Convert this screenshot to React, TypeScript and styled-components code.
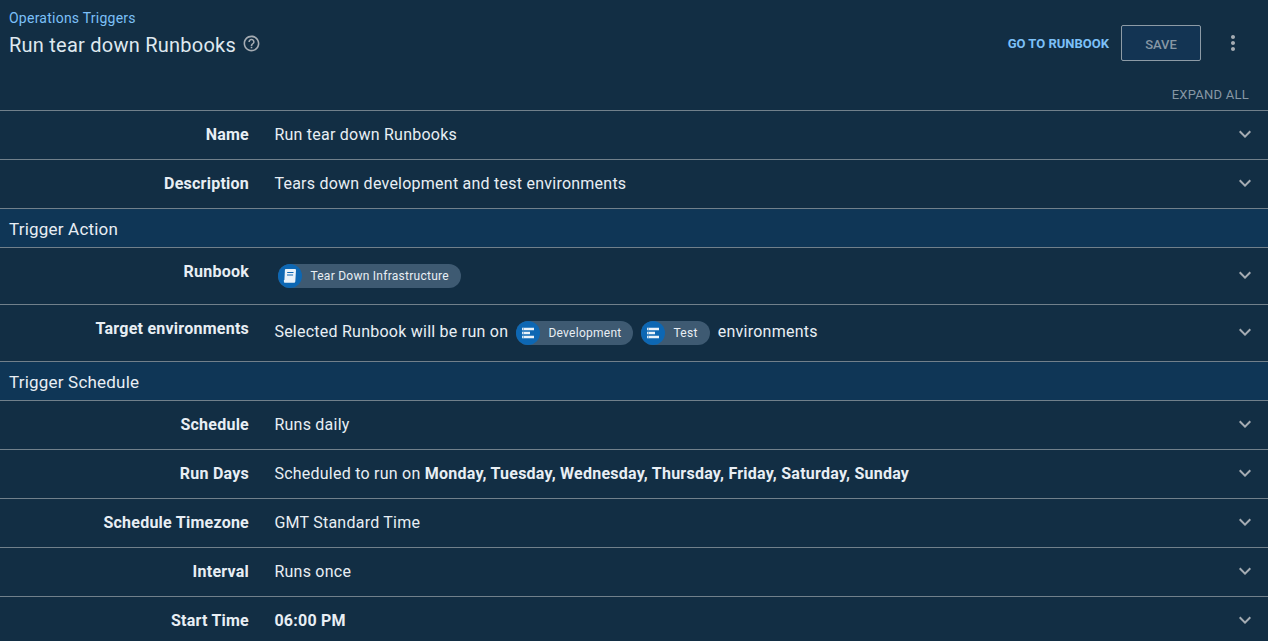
import React from "react";
import styled, { createGlobalStyle } from "styled-components";
import { MdExpandMore, MdHelpOutline, MdMoreVert } from "react-icons/md";

const GlobalStyle = createGlobalStyle`
  *, *::before, *::after { box-sizing: border-box; }
  body {
    margin: 0;
    background: #122e44;
    color: #e8eef4;
    font-family: Roboto, "Liberation Sans", sans-serif;
    font-size: 16px;
    letter-spacing: 0.24px;
    overflow: hidden;
  }
`;

const Page = styled.main`
  height: 641px;
  overflow: hidden;
  background: #122e44;
`;

const Header = styled.header`
  display: flex;
  justify-content: space-between;
  height: 78px;
  padding: 0 23px 0 9px;
`;

const Heading = styled.div`
  padding-top: 8px;
`;

const Breadcrumb = styled.a`
  display: block;
  font-size: 14px;
  line-height: 20px;
  color: #7cc0f8;
`;

const TitleLine = styled.div`
  display: flex;
  align-items: center;
  height: 32px;
`;

const Title = styled.h1`
  margin: 2px 0 0;
  font-size: 20px;
  font-weight: 400;
  line-height: 28px;
  color: #dfe8ef;
`;

const HelpIcon = styled(MdHelpOutline)`
  width: 19px;
  height: 19px;
  margin: 0 0 1px 6px;
  color: #a5acb3;
`;

const Actions = styled.div`
  display: flex;
  align-items: center;
  height: 36px;
  margin-top: 25px;
`;

const LinkButton = styled.button`
  border: 0;
  padding: 1px 0 0;
  margin-right: 12px;
  background: none;
  color: #7cc0f8;
  font: 700 13px/21px Roboto, sans-serif;
`;

const SaveButton = styled.button`
  width: 80px;
  height: 36px;
  padding: 3px 0 0;
  margin-right: 20px;
  border: 1px solid #8d9ba6;
  border-radius: 2px;
  background: #133453;
  color: #8797a4;
  font: 500 13px/21px Roboto, sans-serif;
`;

const MoreIcon = styled(MdMoreVert)`
  width: 24px;
  height: 24px;
  color: #a5acb3;
`;

const ExpandBar = styled.div`
  display: flex;
  justify-content: flex-end;
  height: 32px;
  padding: 7px 19px 0 0;
  font-size: 13px;
  line-height: 20px;
  color: #8797a4;
`;

const Section = styled.h2`
  height: 39px;
  margin: 0;
  padding: 1px 9px 0;
  border-top: 1px solid #71808b;
  background: #0f3656;
  font-size: 17px;
  font-weight: 400;
  line-height: 39px;
  letter-spacing: 0.2px;
`;

const Row = styled.section<{ $tall?: boolean }>`
  display: grid;
  grid-template-columns: 249px 1fr 24px;
  column-gap: 25.4px;
  height: ${(p) => (p.$tall ? 57 : 49)}px;
  padding-right: 11px;
  border-top: 1px solid #71808b;
`;

const Label = styled.div`
  padding-top: 12px;
  text-align: right;
  font-weight: 700;
  line-height: 24px;
`;

const Value = styled.div<{ $chips?: boolean }>`
  display: flex;
  align-items: flex-start;
  padding-top: ${(p) => (p.$chips ? 15 : 12)}px;
  white-space: pre;
  line-height: 24px;
`;

const Chevron = styled(MdExpandMore)`
  align-self: center;
  width: 24px;
  height: 24px;
  margin-bottom: 2px;
  color: #a5acb3;
`;

const ChipBox = styled.span`
  display: inline-flex;
  align-items: center;
  height: 24px;
  margin: 1px 4px 0;
  padding-right: 12px;
  border-radius: 12px;
  background: #3e5a72;
  font-size: 12px;
  line-height: 24px;
  letter-spacing: 0.26px;
`;

const ChipIcon = styled.span`
  display: grid;
  place-items: center;
  width: 24px;
  height: 24px;
  margin-right: 8px;
  border-radius: 50%;
  background: #0d67b3;
`;

const Glyph = styled.svg`
  display: block;
`;

const RunbookGlyph = () => (
  <Glyph width="24" height="24" viewBox="0 0 24 24">
    <path d="M7.8 5H17q1.100 0 1 1.100l-.7 11.400q-.1 1.200-1.200 1.200H6.900q-1.100 0-1-1.200V16h.5l.5-10q0-1 .9-1z" fill="#eaf2f9" />
    <path d="M9.200 8.500h6.300M9 11h6.100" stroke="#0d67b3" strokeWidth="1" />
  </Glyph>
);

const EnvironmentGlyph = () => (
  <Glyph width="24" height="24" viewBox="0 0 24 24">
    <path d="M6 6.800h12v2.400H6zM6 10.800h8v2.400H6zM6 14.800h12v2.400H6z" fill="#eaf2f9" />
    <path d="M6.800 8h1.200M6.800 12h1.200M6.800 16h1.200" stroke="#0d67b3" strokeWidth=".8" />
  </Glyph>
);

const Chip = ({ kind, children }: { kind: "runbook" | "environment"; children: React.ReactNode }) => (
  <ChipBox>
    <ChipIcon>{kind === "runbook" ? <RunbookGlyph /> : <EnvironmentGlyph />}</ChipIcon>
    {children}
  </ChipBox>
);

const Field = ({ label, tall, children }: { label: string; tall?: boolean; children: React.ReactNode }) => (
  <Row $tall={tall}>
    <Label>{label}</Label>
    <Value $chips={tall}>{children}</Value>
    <Chevron />
  </Row>
);

export default function App() {
  return (
    <>
      <GlobalStyle />
      <Page>
        <Header>
          <Heading>
            <Breadcrumb>Operations Triggers</Breadcrumb>
            <TitleLine>
              <Title>Run tear down Runbooks</Title>
              <HelpIcon />
            </TitleLine>
          </Heading>
          <Actions>
            <LinkButton>GO TO RUNBOOK</LinkButton>
            <SaveButton>SAVE</SaveButton>
            <MoreIcon />
          </Actions>
        </Header>
        <ExpandBar>EXPAND ALL</ExpandBar>
        <Field label="Name">Run tear down Runbooks</Field>
        <Field label="Description">Tears down development and test environments</Field>
        <Section>Trigger Action</Section>
        <Field label="Runbook" tall>
          <Chip kind="runbook">Tear Down Infrastructure</Chip>
        </Field>
        <Field label="Target environments" tall>
          <span>Selected Runbook will be run on </span>
          <Chip kind="environment">Development</Chip>
          <Chip kind="environment">Test</Chip>
          <span> environments</span>
        </Field>
        <Section>Trigger Schedule</Section>
        <Field label="Schedule">Runs daily</Field>
        <Field label="Run Days">
          <span>Scheduled to run on </span>
          <strong>Monday, Tuesday, Wednesday, Thursday, Friday, Saturday, Sunday</strong>
        </Field>
        <Field label="Schedule Timezone">GMT Standard Time</Field>
        <Field label="Interval">Runs once</Field>
        <Field label="Start Time">
          <strong>06:00 PM</strong>
        </Field>
      </Page>
    </>
  );
}
